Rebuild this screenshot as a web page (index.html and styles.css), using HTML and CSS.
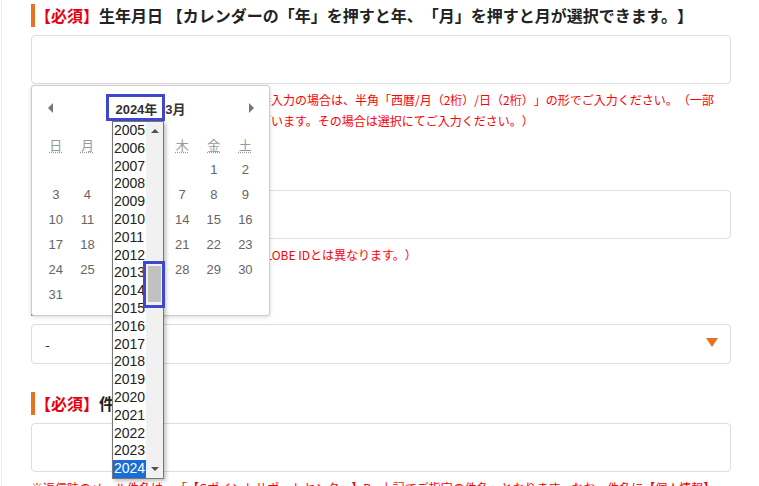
FILE: index.html
```html
<!DOCTYPE html>
<html lang="ja">
<head>
    <meta charset="UTF-8">
    <meta name="viewport" content="width=device-width, initial-scale=1.0">
    <title>お問い合わせフォーム</title>
    <link rel="stylesheet" href="styles.css">
</head>
<body>

    <div class="page">
        <form class="form">

            <div class="field">
                <h3 class="label"><span class="req">【必須】</span>生年月日 【カレンダーの「年」を押すと年、「月」を押すと月が選択できます。】</h3>
                <input class="text" type="text">
                <p class="note">※カレンダーからの選択、または日付を直接入力の場合は、半角「西暦/月（2桁）/日（2桁）」の形でご入力ください。（一部<br>のブラウザでは直接入力できない場合がございます。その場合は選択にてご入力ください。）</p>

                <!-- datepicker popup -->
                <div class="dp">
                    <div class="dp-head">
                        <span class="dp-prev"></span>
                        <span class="dp-title">2024年<span class="dp-month">3月</span></span>
                        <span class="dp-next"></span>
                    </div>
                    <div class="dp-grid">
                        <span class="dow"><abbr>日</abbr></span>
                        <span class="dow"><abbr>月</abbr></span>
                        <span class="dow"><abbr>火</abbr></span>
                        <span class="dow"><abbr>水</abbr></span>
                        <span class="dow"><abbr>木</abbr></span>
                        <span class="dow"><abbr>金</abbr></span>
                        <span class="dow"><abbr>土</abbr></span>

                        <span class="day"></span><span class="day"></span><span class="day"></span><span class="day"></span><span class="day"></span>
                        <span class="day">1</span><span class="day">2</span>
                        <span class="day">3</span><span class="day">4</span><span class="day">5</span><span class="day">6</span><span class="day">7</span><span class="day">8</span><span class="day">9</span>
                        <span class="day">10</span><span class="day">11</span><span class="day">12</span><span class="day">13</span><span class="day">14</span><span class="day">15</span><span class="day">16</span>
                        <span class="day">17</span><span class="day">18</span><span class="day">19</span><span class="day">20</span><span class="day">21</span><span class="day">22</span><span class="day">23</span>
                        <span class="day">24</span><span class="day">25</span><span class="day">26</span><span class="day">27</span><span class="day">28</span><span class="day">29</span><span class="day">30</span>
                        <span class="day">31</span>
                    </div>

                    <!-- year select, opened -->
                    <div class="yl">
                        <div class="yl-items">
                            <div class="yl-item">2005</div>
                            <div class="yl-item">2006</div>
                            <div class="yl-item">2007</div>
                            <div class="yl-item">2008</div>
                            <div class="yl-item">2009</div>
                            <div class="yl-item">2010</div>
                            <div class="yl-item">2011</div>
                            <div class="yl-item">2012</div>
                            <div class="yl-item">2013</div>
                            <div class="yl-item">2014</div>
                            <div class="yl-item">2015</div>
                            <div class="yl-item">2016</div>
                            <div class="yl-item">2017</div>
                            <div class="yl-item">2018</div>
                            <div class="yl-item">2019</div>
                            <div class="yl-item">2020</div>
                            <div class="yl-item">2021</div>
                            <div class="yl-item">2022</div>
                            <div class="yl-item">2023</div>
                            <div class="yl-item selected">2024</div>
                        </div>
                        <div class="yl-bar">
                            <span class="yl-up"></span>
                            <span class="yl-thumb"></span>
                            <span class="yl-down"></span>
                        </div>
                    </div>

                    <span class="mark mark-year"></span>
                    <span class="mark mark-thumb"></span>
                </div>
            </div>

            <div class="field">
                <h3 class="label"><span class="req">【必須】</span>メールアドレス</h3>
                <input class="text" type="text">
                <p class="note">※ご登録済みのメールアドレスです。（BIGLOBE IDとは異なります。）</p>
            </div>

            <div class="field">
                <h3 class="label"><span class="req">【必須】</span>お問い合わせ種別</h3>
                <div class="select">-</div>
            </div>

            <div class="field">
                <h3 class="label"><span class="req">【必須】</span>件名</h3>
                <input class="text" type="text">
                <p class="note">※返信時のメール件名は、「【Gポイントサポートセンター】Re:上記でご指定の件名」となります。なお、件名に【個人情報】は、記載しないでください。</p>
            </div>

        </form>
    </div>

</body>
</html>
```

FILE: styles.css
```css
html, body { overflow: hidden; }
body { margin: 0; font-family: "Noto Sans CJK JP", sans-serif; color: #222; background: #fff; text-spacing-trim: space-all; }
.page { margin-left: 1px; border-left: 1px solid #eee; padding: 4px 0 0 29px; min-height: 486px; box-sizing: border-box; }
.form { width: 700px; }

.field { position: relative; margin-bottom: 28px; }
.label { margin: 0 0 8px; border-left: 4px solid #e8731e; font-size: 16px; line-height: 23px; font-weight: bold; color: #222; }
.req { color: #e60012; }
.text { display: block; width: 100%; height: 49px; box-sizing: border-box; margin: 0; border: 1px solid #ddd; border-radius: 4px; background: #fff; }
.note { margin: 5px 0 0; font-size: 12px; line-height: 21px; color: #f00; }

.select { position: relative; height: 40px; box-sizing: border-box; border: 1px solid #ddd; border-radius: 4px; padding-left: 13px; font-size: 14px; line-height: 38px; color: #333; }
.select::after { content: ""; position: absolute; right: 12px; top: 13px; border-left: 6px solid transparent; border-right: 6px solid transparent; border-top: 9px solid #e8731e; }

/* datepicker */
.dp { position: absolute; top: 81px; left: 0; width: 239px; height: 231px; box-sizing: border-box; padding: 8px 8px 0; border: 1px solid #ccc; border-radius: 3px; background: #fff; box-shadow: 0 1px 4px rgba(0, 0, 0, 0.15); font-family: "Liberation Sans", Arial, "Noto Sans CJK JP", sans-serif; z-index: 5; }
.dp-head { display: flex; align-items: center; justify-content: space-between; height: 28px; margin-bottom: 11px; }
.dp-prev, .dp-next { width: 20px; height: 10px; position: relative; }
.dp-prev::before, .dp-next::before { content: ""; position: absolute; top: 0; border-top: 5px solid transparent; border-bottom: 5px solid transparent; }
.dp-prev::before { left: 8px; border-right: 5px solid #777; }
.dp-next::before { left: 8px; border-left: 5px solid #777; }
.dp-title { font-size: 13px; font-weight: bold; color: #333; }
.dp-month { margin-left: 8px; }
.dp-grid { display: grid; grid-template-columns: repeat(7, 31.6px); }
.dow { height: 24px; line-height: 24px; text-align: center; font-family: "Noto Sans CJK JP", sans-serif; font-size: 13px; color: #999; }
.dow abbr { text-decoration: underline dotted; text-underline-offset: 2px; }
.day { height: 25px; line-height: 25px; text-align: center; font-size: 13px; color: #666; }

/* opened year list */
.yl { position: absolute; left: 80px; top: 35px; display: flex; border: 1px solid #767676; background: #fff; box-shadow: 2px 2px 4px rgba(0, 0, 0, 0.25); }
.yl-items { width: 33px; }
.yl-item { height: 17.8px; line-height: 17.8px; padding-left: 1px; font-size: 14px; color: #222; }
.yl-item.selected { background: #1a6dd6; color: #fff; }
.yl-bar { position: relative; width: 17px; background: #f1f1f1; }
.yl-up, .yl-down { position: absolute; left: 5px; border-left: 4px solid transparent; border-right: 4px solid transparent; }
.yl-up { top: 7px; border-bottom: 4px solid #505050; }
.yl-down { bottom: 7px; border-top: 4px solid #505050; }
.yl-thumb { position: absolute; left: 2px; top: 144px; width: 13px; height: 36px; background: #c1c1c1; }

.mark { position: absolute; box-sizing: border-box; border: 3px solid #3f48cc; z-index: 3; }
.mark-year { left: 74px; top: 8px; width: 59px; height: 27px; }
.mark-thumb { left: 111px; top: 175px; width: 22px; height: 47px; }
```
